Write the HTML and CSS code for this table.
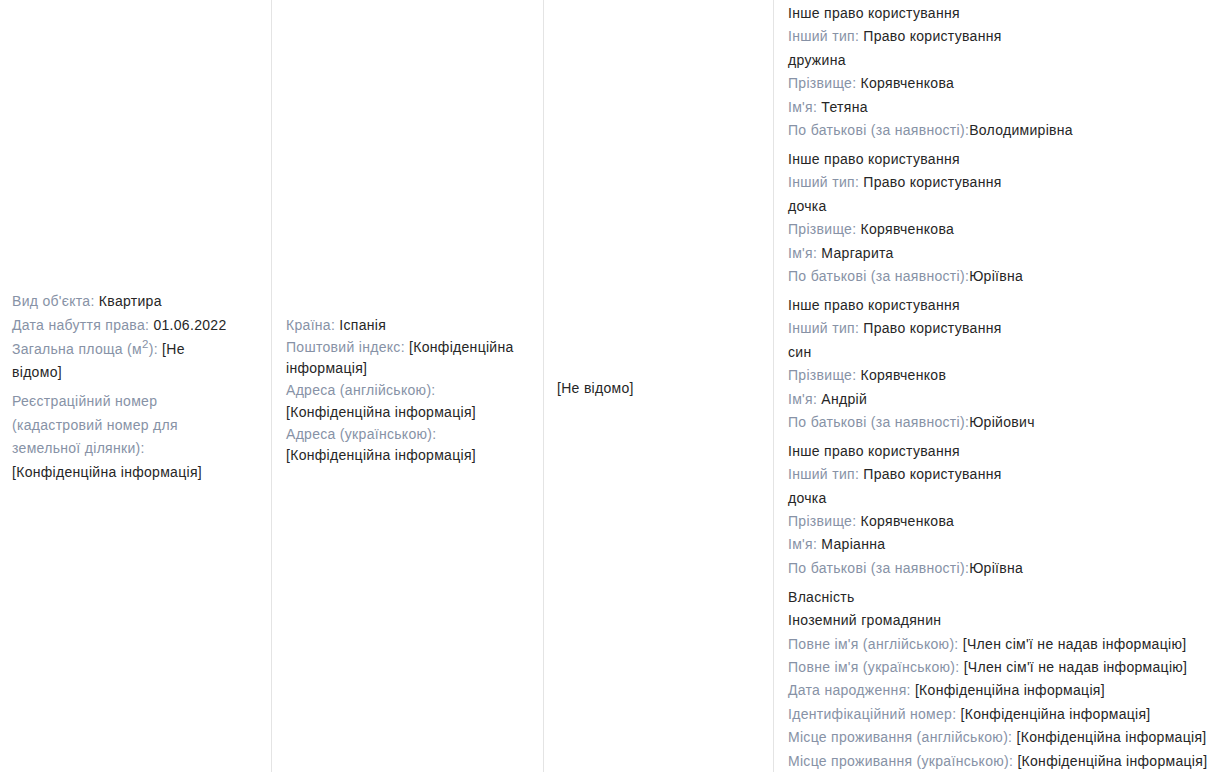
FILE: index.html
```html
<!DOCTYPE html>
<html lang="uk">
<head>
<meta charset="utf-8">
<title>Об'єкти нерухомості</title>
<link rel="stylesheet" href="styles.css">
</head>
<body>
<div class="decl">
  <div class="row">
    <div class="cell cell-object">
      <div class="group">
        <div class="field"><span class="lbl">Вид об'єкта: </span><span class="val">Квартира</span></div>
        <div class="field"><span class="lbl">Дата набуття права: </span><span class="val">01.06.2022</span></div>
        <div class="field"><span class="lbl">Загальна площа (м<sup>2</sup>): </span><span class="val">[Не відомо]</span></div>
      </div>
      <div class="group">
        <div class="field"><span class="lbl">Реєстраційний номер (кадастровий номер для земельної ділянки): </span><span class="val">[Конфіденційна інформація]</span></div>
      </div>
    </div>
    <div class="cell cell-address">
      <div class="addr">
        <div class="field"><span class="lbl">Країна: </span><span class="val">Іспанія</span></div>
        <div class="field"><span class="lbl">Поштовий індекс: </span><span class="val">[Конфіденційна інформація]</span></div>
        <div class="field"><span class="lbl">Адреса (англійською): </span><span class="val">[Конфіденційна інформація]</span></div>
        <div class="field"><span class="lbl">Адреса (українською): </span><span class="val">[Конфіденційна інформація]</span></div>
      </div>
    </div>
    <div class="cell cell-cost">
      <div class="field val">[Не відомо]</div>
    </div>
    <div class="cell cell-rights">
      <div class="group">
        <div class="field val">Інше право користування</div>
        <div class="field"><span class="lbl">Інший тип: </span><span class="val">Право користування</span></div>
        <div class="field val">дружина</div>
        <div class="field"><span class="lbl">Прізвище: </span><span class="val">Корявченкова</span></div>
        <div class="field"><span class="lbl">Ім'я: </span><span class="val">Тетяна</span></div>
        <div class="field"><span class="lbl">По батькові (за наявності):</span><span class="val">Володимирівна</span></div>
      </div>
      <div class="group">
        <div class="field val">Інше право користування</div>
        <div class="field"><span class="lbl">Інший тип: </span><span class="val">Право користування</span></div>
        <div class="field val">дочка</div>
        <div class="field"><span class="lbl">Прізвище: </span><span class="val">Корявченкова</span></div>
        <div class="field"><span class="lbl">Ім'я: </span><span class="val">Маргарита</span></div>
        <div class="field"><span class="lbl">По батькові (за наявності):</span><span class="val">Юріївна</span></div>
      </div>
      <div class="group">
        <div class="field val">Інше право користування</div>
        <div class="field"><span class="lbl">Інший тип: </span><span class="val">Право користування</span></div>
        <div class="field val">син</div>
        <div class="field"><span class="lbl">Прізвище: </span><span class="val">Корявченков</span></div>
        <div class="field"><span class="lbl">Ім'я: </span><span class="val">Андрій</span></div>
        <div class="field"><span class="lbl">По батькові (за наявності):</span><span class="val">Юрійович</span></div>
      </div>
      <div class="group">
        <div class="field val">Інше право користування</div>
        <div class="field"><span class="lbl">Інший тип: </span><span class="val">Право користування</span></div>
        <div class="field val">дочка</div>
        <div class="field"><span class="lbl">Прізвище: </span><span class="val">Корявченкова</span></div>
        <div class="field"><span class="lbl">Ім'я: </span><span class="val">Маріанна</span></div>
        <div class="field"><span class="lbl">По батькові (за наявності):</span><span class="val">Юріївна</span></div>
      </div>
      <div class="group">
        <div class="field val">Власність</div>
        <div class="field val">Іноземний громадянин</div>
        <div class="field"><span class="lbl">Повне ім'я (англійською): </span><span class="val">[Член сім'ї не надав інформацію]</span></div>
        <div class="field"><span class="lbl">Повне ім'я (українською): </span><span class="val">[Член сім'ї не надав інформацію]</span></div>
        <div class="field"><span class="lbl">Дата народження: </span><span class="val">[Конфіденційна інформація]</span></div>
        <div class="field"><span class="lbl">Ідентифікаційний номер: </span><span class="val">[Конфіденційна інформація]</span></div>
        <div class="field"><span class="lbl">Місце проживання (англійською): </span><span class="val">[Конфіденційна інформація]</span></div>
        <div class="field"><span class="lbl">Місце проживання (українською): </span><span class="val">[Конфіденційна інформація]</span></div>
      </div>
    </div>
  </div>
</div>
</body>
</html>
```
FILE: styles.css
```css
html, body {
  margin: 0;
  padding: 0;
  background: #ffffff;
  overflow: hidden;
}

body {
  font-family: "Liberation Sans", Arial, sans-serif;
  font-size: 14px;
  letter-spacing: 0.3px;
  color: #2b2b2b;
}

.decl {
  width: 1211px;
}

.row {
  display: grid;
  grid-template-columns: 271px 272px 230px 438px;
  align-items: stretch;
}

.cell {
  box-sizing: border-box;
  display: flex;
  flex-direction: column;
  justify-content: center;
  padding: 2px 14px 0 14px;
  line-height: 23.4px;
  min-width: 0;
}

.cell + .cell {
  border-left: 1px solid #e4e4e4;
}

.cell-object {
  padding-left: 12px;
  padding-right: 37px;
  line-height: 23.6px;
}

.cell-address {
  line-height: 21.8px;
}

.addr {
  padding-top: 7px;
}

.cell-cost {
  padding-left: 13px;
  padding-top: 4px;
}

.cell-rights {
  padding-right: 0;
}

.group + .group {
  margin-top: 5.5px;
}

.lbl {
  color: #8792a6;
}

.val {
  color: #262626;
}

sup {
  font-size: 11.5px;
  line-height: 0;
  vertical-align: 6px;
}
```
